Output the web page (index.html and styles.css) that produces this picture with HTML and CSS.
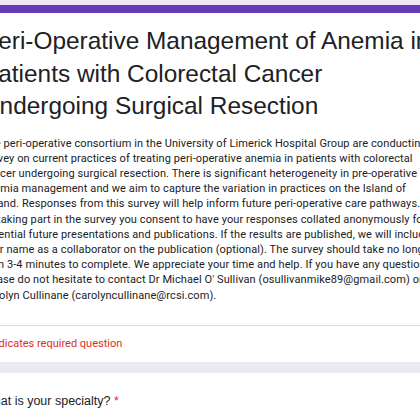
FILE: index.html
```html
<!DOCTYPE html>
<html>
<head>
<meta charset="utf-8">
<link rel="stylesheet" href="styles.css">
</head>
<body>
<div class="page">
  <section class="card header-card">
    <div class="card-top"></div>
    <div class="card-body">
      <h1 class="title">
        <span class="line">Peri-Operative Management of Anemia in</span>
        <span class="line">Patients with Colorectal Cancer</span>
        <span class="line">Undergoing Surgical Resection</span>
      </h1>
      <div class="desc">
        <span class="line">The peri-operative consortium in the University of Limerick Hospital Group are conducting a</span>
        <span class="line">survey on current practices of treating peri-operative anemia in patients with colorectal</span>
        <span class="line">cancer undergoing surgical resection. There is significant heterogeneity in pre-operative</span>
        <span class="line">anemia management and we aim to capture the variation in practices on the Island of</span>
        <span class="line">Ireland. Responses from this survey will help inform future peri-operative care pathways.</span>
        <span class="line">By taking part in the survey you consent to have your responses collated anonymously for</span>
        <span class="line">potential future presentations and publications. If the results are published, we will include</span>
        <span class="line">your name as a collaborator on the publication (optional). The survey should take no longer</span>
        <span class="line">than 3-4 minutes to complete. We appreciate your time and help. If you have any questions</span>
        <span class="line">please do not hesitate to contact Dr Michael O' Sullivan (osullivanmike89@gmail.com) or</span>
        <span class="line">Carolyn Cullinane (carolyncullinane@rcsi.com).</span>
      </div>
    </div>
    <div class="card-foot">
      <span class="required">* Indicates required question</span>
    </div>
  </section>
  <section class="card question-card">
    <div class="question">What is your specialty? <span class="star">*</span></div>
  </section>
</div>
</body>
</html>
```
FILE: styles.css
```css
html, body {
  margin: 0;
  padding: 0;
  overflow: hidden;
  background: #ede7f6;
}
body {
  width: 420px;
  height: 420px;
}
.page {
  margin-left: -42px;
  width: 540px;
  padding-top: 5px;
  display: flex;
  flex-direction: column;
  gap: 11px;
}
.card {
  background: #ffffff;
}
.card-top {
  height: 8px;
  background: #673ab7;
}
.card-body {
  padding: 12px 24px 22px 24px;
  border-bottom: 1px solid #dadce0;
}
.line {
  display: block;
  white-space: nowrap;
}
.title {
  margin: 0;
  font-family: "Liberation Sans", Arial, sans-serif;
  font-weight: 400;
  font-size: 24.4px;
  line-height: 32.5px;
  color: #202124;
}
.desc {
  margin-top: 13px;
  font-family: Roboto, "Liberation Sans", sans-serif;
  font-size: 11px;
  letter-spacing: 0.1px;
  line-height: 15.2px;
  color: #202124;
}
.card-foot {
  padding: 10px 24px 11px 24px;
}
.required {
  display: block;
  font-family: Roboto, "Liberation Sans", sans-serif;
  font-size: 11px;
  line-height: 15px;
  color: #d93025;
}
.question-card {
  padding: 20px 24px 30px 24px;
}
.question {
  font-family: "Liberation Sans", Arial, sans-serif;
  font-size: 12.5px;
  line-height: 16px;
  color: #202124;
}
.star {
  color: #d93025;
}
```
